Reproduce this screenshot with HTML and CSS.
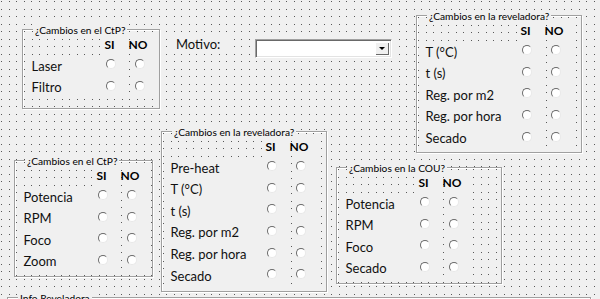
FILE: index.html
```html
<!DOCTYPE html>
<html lang="es">

<head>
  <meta charset="UTF-8">
  <meta name="viewport" content="width=device-width, initial-scale=1.0">
  <title>Cambios</title>
  <link rel="stylesheet" href="styles.css">
</head>

<body>
  <div class="form">

    <!-- CtP arriba -->
    <div class="frame ctp-top">
      <span class="frame-title">¿Cambios en el CtP?</span>
      <div class="opts">
        <span></span><b class="head"><span>SI</span></b><b class="head"><span>NO</span></b>
        <span class="lbl">Laser</span><span class="opt"><i></i></span><span class="opt"><i></i></span>
        <span class="lbl">Filtro</span><span class="opt"><i></i></span><span class="opt"><i></i></span>
      </div>
    </div>

    <span class="motivo">Motivo:</span>
    <div class="combo">
      <span class="combo-btn"><i></i></span>
    </div>

    <!-- reveladora arriba -->
    <div class="frame rev-top">
      <span class="frame-title">¿Cambios en la reveladora?</span>
      <div class="opts">
        <span></span><b class="head"><span>SI</span></b><b class="head"><span>NO</span></b>
        <span class="lbl">T (°C)</span><span class="opt"><i></i></span><span class="opt"><i></i></span>
        <span class="lbl">t (s)</span><span class="opt"><i></i></span><span class="opt"><i></i></span>
        <span class="lbl">Reg. por m2</span><span class="opt"><i></i></span><span class="opt"><i></i></span>
        <span class="lbl">Reg. por hora</span><span class="opt"><i></i></span><span class="opt"><i></i></span>
        <span class="lbl">Secado</span><span class="opt"><i></i></span><span class="opt"><i></i></span>
      </div>
    </div>

    <!-- CtP abajo -->
    <div class="frame ctp-bottom">
      <span class="frame-title">¿Cambios en el CtP?</span>
      <div class="opts">
        <span></span><b class="head"><span>SI</span></b><b class="head"><span>NO</span></b>
        <span class="lbl">Potencia</span><span class="opt"><i></i></span><span class="opt"><i></i></span>
        <span class="lbl">RPM</span><span class="opt"><i></i></span><span class="opt"><i></i></span>
        <span class="lbl">Foco</span><span class="opt"><i></i></span><span class="opt"><i></i></span>
        <span class="lbl">Zoom</span><span class="opt"><i></i></span><span class="opt"><i></i></span>
      </div>
    </div>

    <!-- reveladora centro -->
    <div class="frame rev-mid">
      <span class="frame-title">¿Cambios en la reveladora?</span>
      <div class="opts">
        <span></span><b class="head"><span>SI</span></b><b class="head"><span>NO</span></b>
        <span class="lbl">Pre-heat</span><span class="opt"><i></i></span><span class="opt"><i></i></span>
        <span class="lbl">T (°C)</span><span class="opt"><i></i></span><span class="opt"><i></i></span>
        <span class="lbl">t (s)</span><span class="opt"><i></i></span><span class="opt"><i></i></span>
        <span class="lbl">Reg. por m2</span><span class="opt"><i></i></span><span class="opt"><i></i></span>
        <span class="lbl">Reg. por hora</span><span class="opt"><i></i></span><span class="opt"><i></i></span>
        <span class="lbl">Secado</span><span class="opt"><i></i></span><span class="opt"><i></i></span>
      </div>
    </div>

    <!-- COU -->
    <div class="frame cou">
      <span class="frame-title">¿Cambios en la COU?</span>
      <div class="opts">
        <span></span><b class="head"><span>SI</span></b><b class="head"><span>NO</span></b>
        <span class="lbl">Potencia</span><span class="opt"><i></i></span><span class="opt"><i></i></span>
        <span class="lbl">RPM</span><span class="opt"><i></i></span><span class="opt"><i></i></span>
        <span class="lbl">Foco</span><span class="opt"><i></i></span><span class="opt"><i></i></span>
        <span class="lbl">Secado</span><span class="opt"><i></i></span><span class="opt"><i></i></span>
      </div>
    </div>

    <div class="frame info">
      <span class="frame-title">Info Reveladora</span>
    </div>

  </div>
</body>

</html>
```

FILE: styles.css
```css
/* lienzo del formulario en modo diseño, con la rejilla de puntos */
:root {
  --face: #f0f0f0;
  --grid: url("data:image/svg+xml,%3Csvg xmlns='http://www.w3.org/2000/svg' width='15' height='15'%3E%3Cg fill='%23585858'%3E%3Crect x='1' y='1' width='1' height='1'/%3E%3Crect x='9' y='1' width='1' height='1'/%3E%3Crect x='1' y='9' width='1' height='1'/%3E%3Crect x='9' y='9' width='1' height='1'/%3E%3C/g%3E%3C/svg%3E");
}

body {
  margin: 0;
  background: var(--face);
}

.form {
  position: relative;
  width: 600px;
  height: 299px;
  overflow: hidden;
  background: var(--face) var(--grid);
  font-family: Lato, "Open Sans", sans-serif;
  color: #111;
}

/* marcos (groupbox grabado) */
.frame {
  position: absolute;
  box-sizing: border-box;
  border: 1px solid #a0a0a0;
  box-shadow: 1px 1px 0 #fff, inset 1px 1px 0 #fff;
  background: var(--face) var(--grid);
}

.frame-title {
  position: absolute;
  left: 10px;
  top: -6px;
  padding: 0 2px;
  font-size: 10.2px;
  line-height: 12px;
  color: #000;
  background: var(--face);
  white-space: nowrap;
}

.ctp-top {
  left: 22px;
  top: 29px;
  width: 138px;
  height: 80px;
  --lw: 69px;
}

.rev-top {
  left: 416px;
  top: 15px;
  width: 166px;
  height: 138px;
  --lw: 91px;
}

.ctp-bottom {
  left: 14px;
  top: 160px;
  width: 139px;
  height: 117px;
  --lw: 69px;
}

.rev-mid {
  left: 161px;
  top: 131px;
  width: 166px;
  height: 161px;
  --lw: 91px;
}

.cou {
  left: 336px;
  top: 167px;
  width: 166px;
  height: 117px;
  --lw: 69px;
}

.info {
  left: 7px;
  top: 297px;
  width: 584px;
  height: 40px;
}

/* filas: etiqueta | SI | NO */
.opts {
  display: grid;
  grid-template-columns: var(--lw) 26px 26px;
  grid-template-rows: 23px;
  grid-auto-rows: 21.67px;
  column-gap: 2.5px;
  padding: 2.5px 0 0 8.5px;
}

.lbl {
  font-size: 13px;
  line-height: 21.67px;
  white-space: nowrap;
  background: var(--face);
}

.head {
  display: flex;
  font-size: 12px;
  font-weight: 700;
  line-height: 23px;
  color: #000;
  background: var(--face);
}

.head span {
  width: 13px;
  display: flex;
  justify-content: center;
}

.opt {
  padding-top: 3.6px;
  background: var(--face);
}

.opt i {
  display: block;
  width: 10px;
  height: 10px;
  margin-left: 3px;
  box-sizing: border-box;
  border-radius: 50%;
  background: #fff;
  border: 1.5px solid;
  border-color: #6a6a6a #e8e8e8 #e8e8e8 #6a6a6a;
}

/* Motivo + combo */
.motivo {
  position: absolute;
  left: 170px;
  top: 36px;
  width: 58px;
  padding-left: 6px;
  font-size: 13px;
  line-height: 17px;
  background: var(--face);
}

.combo {
  position: absolute;
  left: 255px;
  top: 39px;
  width: 137px;
  height: 19px;
  box-sizing: border-box;
  padding: 2px;
  display: flex;
  justify-content: flex-end;
  background: #fff;
  border: 1px solid;
  border-color: #a0a0a0 #fff #fff #a0a0a0;
  box-shadow: inset 1px 1px 0 #696969, inset -1px -1px 0 #e3e3e3;
}

.combo-btn {
  width: 14px;
  height: 13px;
  box-sizing: border-box;
  display: flex;
  justify-content: center;
  align-items: center;
  background: var(--face);
  box-shadow: inset 1px 1px 0 #fff, inset -1px -1px 0 #696969;
}

.combo-btn i {
  width: 0;
  height: 0;
  border-left: 3px solid transparent;
  border-right: 3px solid transparent;
  border-top: 3px solid #000;
}
```
